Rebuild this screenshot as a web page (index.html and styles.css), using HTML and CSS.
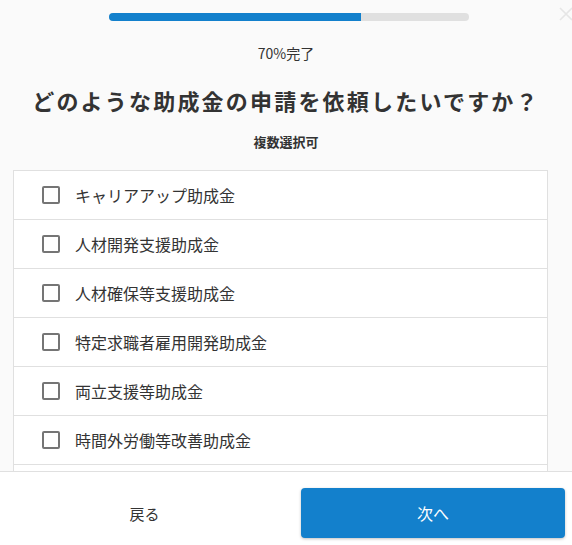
FILE: index.html
```html
<!DOCTYPE html>
<html lang="ja">
<head>
<meta charset="utf-8">
<link rel="stylesheet" href="styles.css">
</head>
<body>
<div class="app">
  <div class="content">
    <div class="top">
      <div class="progress"><div class="fill" style="width:70%"></div></div>
      <svg class="close" width="16" height="16" viewBox="0 0 16 16"><path d="M2 2L14 14M14 2L2 14" stroke="#e6e6e6" stroke-width="1.6" fill="none"/></svg>
    </div>
    <div class="percent">70%完了</div>
    <h1 class="title">どのような助成金の申請を依頼したいですか？</h1>
    <div class="sub">複数選択可</div>
    <ul class="list">
      <li class="row"><span class="box"></span><span class="label">キャリアアップ助成金</span></li>
      <li class="row"><span class="box"></span><span class="label">人材開発支援助成金</span></li>
      <li class="row"><span class="box"></span><span class="label">人材確保等支援助成金</span></li>
      <li class="row"><span class="box"></span><span class="label">特定求職者雇用開発助成金</span></li>
      <li class="row"><span class="box"></span><span class="label">両立支援等助成金</span></li>
      <li class="row"><span class="box"></span><span class="label">時間外労働等改善助成金</span></li>
      <li class="row"></li>
    </ul>
  </div>
  <div class="footer">
    <button class="back">戻る</button>
    <button class="next">次へ</button>
  </div>
</div>
</body>
</html>
```
FILE: styles.css
```css
* { box-sizing: border-box; }
html, body { margin: 0; padding: 0; }
body {
  background: #fafafa;
  font-family: "Noto Sans CJK JP", "Noto Sans", sans-serif;
  color: #333;
}
.app {
  width: 572px;
  height: 545px;
  display: flex;
  flex-direction: column;
  overflow: hidden;
}
.content {
  flex: 1;
  overflow: hidden;
  min-height: 0;
}
.top {
  position: relative;
  height: 34px;
  padding-top: 13px;
}
.progress {
  margin-left: 109px;
  width: 360px;
  height: 8px;
  background: #e0e0e0;
  border-radius: 4px;
  overflow: hidden;
}
.fill {
  height: 100%;
  background: #1380cc;
}
.close {
  position: absolute;
  right: -2px;
  top: 6px;
}
.percent {
  text-align: center;
  font-size: 14px;
  line-height: 20px;
  margin-top: 9px;
}
.title {
  margin: 20px 0 0;
  text-align: center;
  font-size: 22px;
  font-weight: 700;
  letter-spacing: 2.2px;
  line-height: 34px;
  color: #333;
}
.sub {
  text-align: center;
  font-size: 13px;
  font-weight: 700;
  line-height: 20px;
  margin-top: 15px;
  color: #333;
}
.list {
  list-style: none;
  margin: 18px 0 0 13px;
  padding: 0;
  width: 535px;
  background: #fff;
  border: 1px solid #e0e0e0;
}
.row {
  display: flex;
  align-items: center;
  height: 49px;
  border-bottom: 1px solid #e0e0e0;
  padding-left: 28px;
}
.box {
  width: 18px;
  height: 18px;
  border: 2px solid #757575;
  border-radius: 2px;
  flex: none;
}
.label {
  margin-left: 15px;
  font-size: 16px;
  color: #333;
}
.footer {
  flex: none;
  height: 74px;
  background: #fff;
  border-top: 1px solid #e0e0e0;
  display: flex;
  align-items: flex-start;
  padding: 16px 7px 0 0;
}
.back {
  flex: 1;
  background: none;
  border: none;
  font-family: inherit;
  font-size: 15px;
  color: #333;
  height: 50px;
  padding: 0;
  margin-right: 12px;
}
.next {
  width: 264px;
  height: 50px;
  background: #1380cc;
  border: none;
  border-radius: 4px;
  color: #fff;
  font-family: inherit;
  font-size: 16px;
  box-shadow: 0 1px 3px rgba(0,0,0,0.25);
  padding: 0;
}
```
